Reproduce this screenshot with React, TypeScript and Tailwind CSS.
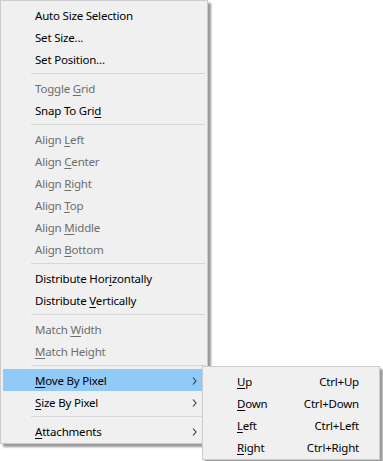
import React from "react";

type Item =
  | { kind: "sep" }
  | {
      kind: "item";
      label: string;
      mnemonic?: number; // index of underlined char
      disabled?: boolean;
      submenu?: boolean;
      active?: boolean;
    };

const mainItems: Item[] = [
  { kind: "item", label: "Auto Size Selection" },
  { kind: "item", label: "Set Size..." },
  { kind: "item", label: "Set Position..." },
  { kind: "sep" },
  { kind: "item", label: "Toggle Grid", mnemonic: 7, disabled: true },
  { kind: "item", label: "Snap To Grid", mnemonic: 11 },
  { kind: "sep" },
  { kind: "item", label: "Align Left", mnemonic: 6, disabled: true },
  { kind: "item", label: "Align Center", mnemonic: 6, disabled: true },
  { kind: "item", label: "Align Right", mnemonic: 6, disabled: true },
  { kind: "item", label: "Align Top", mnemonic: 6, disabled: true },
  { kind: "item", label: "Align Middle", mnemonic: 6, disabled: true },
  { kind: "item", label: "Align Bottom", mnemonic: 6, disabled: true },
  { kind: "sep" },
  { kind: "item", label: "Distribute Horizontally", mnemonic: 14 },
  { kind: "item", label: "Distribute Vertically", mnemonic: 11 },
  { kind: "sep" },
  { kind: "item", label: "Match Width", mnemonic: 6, disabled: true },
  { kind: "item", label: "Match Height", mnemonic: 0, disabled: true },
  { kind: "sep" },
  { kind: "item", label: "Move By Pixel", mnemonic: 0, submenu: true, active: true },
  { kind: "item", label: "Size By Pixel", mnemonic: 0, submenu: true },
  { kind: "sep" },
  { kind: "item", label: "Attachments", mnemonic: 0, submenu: true },
];

const subItems = [
  { label: "Up", shortcut: "Ctrl+Up" },
  { label: "Down", shortcut: "Ctrl+Down" },
  { label: "Left", shortcut: "Ctrl+Left" },
  { label: "Right", shortcut: "Ctrl+Right" },
];

function Label({ text, mnemonic }: { text: string; mnemonic?: number }) {
  if (mnemonic === undefined) return <>{text}</>;
  return (
    <>
      {text.slice(0, mnemonic)}
      <span className="underline underline-offset-[2px]">{text[mnemonic]}</span>
      {text.slice(mnemonic + 1)}
    </>
  );
}

function Chevron() {
  return (
    <svg width="5" height="8" viewBox="0 0 5 8" className="text-[#333]">
      <path d="M1 0.5 L4 4 L1 7.5" fill="none" stroke="currentColor" strokeWidth="1.1" />
    </svg>
  );
}

export default function App() {
  return (
    <div
      className="relative h-[461px] w-[383px] overflow-hidden bg-white text-[11.5px] leading-none tracking-[-0.2px]"
      style={{ fontFamily: '"Noto Sans", "Segoe UI", sans-serif' }}
    >
      {/* main context menu */}
      <div className="w-[208px] border border-[#cccccc] bg-[#f0f0f0] px-[2px] pt-[3px] pb-[1px] shadow-[3px_3px_2px_rgba(0,0,0,0.4)]">
        {mainItems.map((it, i) =>
          it.kind === "sep" ? (
            <div key={i} className="flex h-[7px] items-center pl-[28px]">
              <div className="h-px w-full bg-[#d7d7d7]" />
            </div>
          ) : (
            <div
              key={i}
              className={`flex h-[22px] items-center pl-[32px] pr-[8px] pt-[1px] ${
                it.active ? "bg-[#91c9f7]" : ""
              } ${it.disabled ? "text-[#6d6d6d]" : "text-black"}`}
            >
              <span className="flex-1 whitespace-nowrap">
                <Label text={it.label} mnemonic={it.mnemonic} />
              </span>
              {it.submenu && <Chevron />}
            </div>
          )
        )}
      </div>

      {/* Move By Pixel submenu */}
      <div className="absolute left-[202px] top-[366px] w-[178px] border border-[#cccccc] bg-[#f0f0f0] px-[2px] pt-[3px] pb-[1px] shadow-[3px_3px_2px_rgba(0,0,0,0.4)]">
        {subItems.map((s) => (
          <div key={s.label} className="flex h-[22px] items-center pl-[32px] pr-[18px] pt-[1px] text-black">
            <span className="flex-1 whitespace-nowrap">
              <Label text={s.label} mnemonic={0} />
            </span>
            <span className="whitespace-nowrap">{s.shortcut}</span>
          </div>
        ))}
      </div>
    </div>
  );
}
